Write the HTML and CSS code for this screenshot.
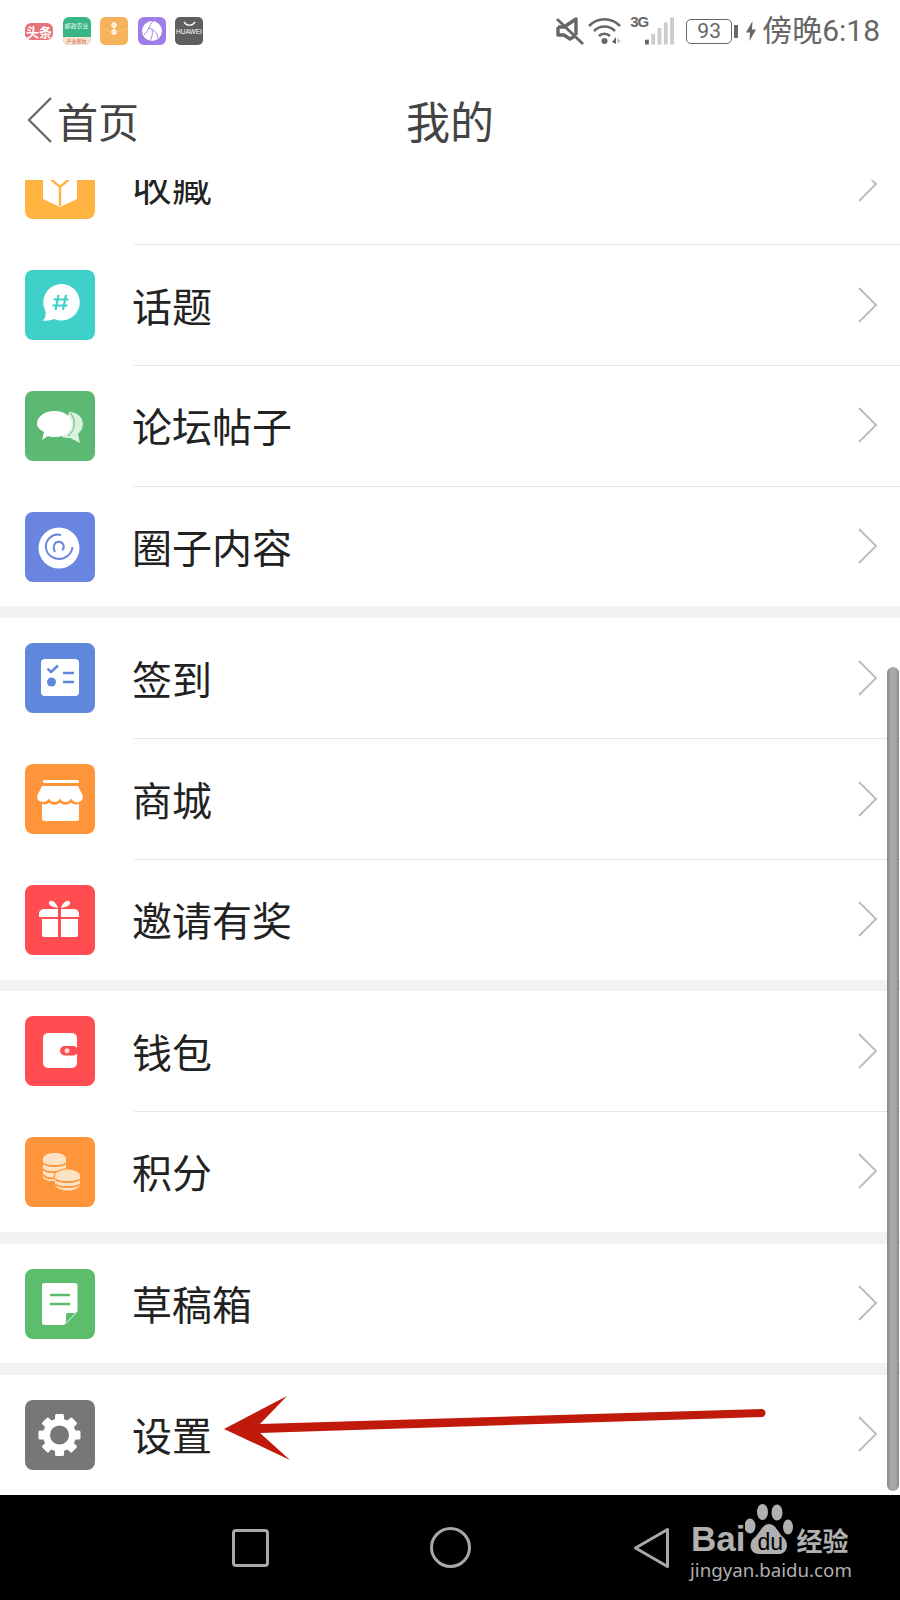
FILE: index.html
```html
<!DOCTYPE html>
<html lang="zh-CN">
<head>
    <meta charset="UTF-8">
    <meta name="viewport" content="width=device-width, initial-scale=1.0">
    <link rel="stylesheet" href="styles.css">
    <title>我的</title>
</head>
<body>
<div class="phone">

    <!-- barre d'etat -->
    <div class="status">
        <div class="notifs">
            <span class="notif toutiao">头条</span>
            <span class="notif farm"><span class="farm-top">邮政农业</span><span class="farm-bottom">产业帮扶</span></span>
            <svg class="notif" viewBox="0 0 28 28"><rect width="28" height="28" rx="5" fill="#f5b35c"/><path d="M0 11 L14 16 L28 11" fill="none" stroke="#f8c684" stroke-width="0.800"/><path d="M14 5 V17" stroke="#fff" stroke-width="1.200"/><circle cx="14" cy="8" r="2" fill="none" stroke="#fff" stroke-width="1.200"/><circle cx="14" cy="15" r="2" fill="none" stroke="#fff" stroke-width="1.200"/></svg>
            <svg class="notif" viewBox="0 0 28 28"><rect width="28" height="28" rx="6" fill="#a07ce6"/><circle cx="14" cy="14" r="10" fill="#fff"/><path d="M15 4 C11 9 11 13 6 18 M10 11 C15 12 19 15 20 21 M14 12 C15 17 14 20 12 24" fill="none" stroke="#a07ce6" stroke-width="0.900"/></svg>
            <span class="notif huawei"><svg viewBox="0 0 12 5"><path d="M1 0.500 C3 4.500 9 4.500 11 0.500" fill="none" stroke="#fff" stroke-width="1.300"/></svg><span>HUAWEI</span></span>
        </div>
        <div class="sys">
            <svg class="ic-mute" viewBox="0 0 28 28"><path d="M2 10 H8 L20 2 V18 M2 10 V18 H8 L14 22 L19 19" fill="none" stroke="#666" stroke-width="3.400" stroke-linejoin="round"/><path d="M1 2 L27 27" stroke="#666" stroke-width="2.800"/></svg>
            <svg class="ic-wifi" viewBox="0 0 33 28"><path d="M1 9 C10 0 23 0 32 9 M6 14 C12 8 21 8 27 14 M11 19 C14 16 19 16 22 19" fill="none" stroke="#666" stroke-width="2.600"/><circle cx="16.500" cy="24" r="3" fill="#666"/><path d="M24 25 L28 20 V27 Z" fill="#666"/><path d="M29 21 L33 24 L29 27 Z" fill="#ccc"/></svg>
            <div class="signal">
                <span class="net">3G</span>
                <svg class="bars" viewBox="0 0 30 28"><rect x="0" y="23" width="4" height="5" fill="#666"/><rect x="6.500" y="17" width="4" height="11" fill="#ccc"/><rect x="13" y="11" width="4" height="17" fill="#ccc"/><rect x="19.500" y="5" width="4" height="23" fill="#ccc"/><rect x="26" y="0" width="4" height="28" fill="#ccc"/></svg>
            </div>
            <span class="batt">93</span>
            <span class="batt-nub"></span>
            <svg class="ic-bolt" viewBox="0 0 10 20"><path d="M6.500 0 L0 11.500 H4 L3.500 20 L10 8.500 H6 Z" fill="#666"/></svg>
            <span class="clock">傍晚6:18</span>
        </div>
    </div>

    <!-- entete -->
    <div class="header">
        <svg class="back-arrow" viewBox="0 0 25 46"><path d="M24 1 L2 23 L24 45" fill="none" stroke="#666" stroke-width="2.200"/></svg>
        <span class="back-label">首页</span>
        <span class="title">我的</span>
    </div>

    <div class="list">
        <div class="group first">
            <div class="row">
                <svg class="tile" viewBox="0 0 70 70"><rect width="70" height="70" rx="8" fill="#ffb340"/><path d="M18 24 H52 V50 L35 58 L18 50 Z" fill="#fff"/><path d="M22 27 L35 38 L48 27 M35 38 V57" fill="none" stroke="#ffb340" stroke-width="2.400"/></svg>
                <div class="row-main"><span class="label">收藏</span><svg class="chev" viewBox="0 0 20 36"><path d="M1 1 L18 18 L1 35" fill="none" stroke="#bdbdbd" stroke-width="2"/></svg></div>
            </div>
            <div class="row">
                <svg class="tile" viewBox="0 0 70 70"><rect width="70" height="70" rx="8" fill="#3fd0c9"/><path d="M36.500 14 A18.300 18.300 0 1 1 29 49 C25 50.500 22 51 18 50.500 C20.500 48 21 45 20.500 41 A18.300 18.300 0 0 1 36.500 14 Z" fill="#fff"/><path d="M33.500 25 L30.500 40 M41 25 L38 40 M28.500 29.500 H43.500 M27.500 35.500 H42.500" fill="none" stroke="#3fd0c9" stroke-width="2.200"/></svg>
                <div class="row-main"><span class="label">话题</span><svg class="chev" viewBox="0 0 20 36"><path d="M1 1 L18 18 L1 35" fill="none" stroke="#bdbdbd" stroke-width="2"/></svg></div>
            </div>
            <div class="row">
                <svg class="tile" viewBox="0 0 70 70"><rect width="70" height="70" rx="8" fill="#5bb974"/><path d="M44 21 C53 21 58 27 58 33 C58 37 56 40 53 43 L55 52 L45 47 C42 47 40 47 37 46 Z" fill="#d8f2de"/><path d="M45 22 C51 27 51 39 43 45" fill="none" stroke="#5bb974" stroke-width="1"/><path d="M29.500 20 C40 20 47 26 47 33 C47 40 40 46 30 46 C27 46 25 46 23 45 L17 49 L19 41 C14 38 12 36 12 33 C12 26 19 20 29.500 20 Z" fill="#fff"/></svg>
                <div class="row-main"><span class="label">论坛帖子</span><svg class="chev" viewBox="0 0 20 36"><path d="M1 1 L18 18 L1 35" fill="none" stroke="#bdbdbd" stroke-width="2"/></svg></div>
            </div>
            <div class="row last">
                <svg class="tile" viewBox="0 0 70 70"><rect width="70" height="70" rx="8" fill="#6a85e0"/><circle cx="34" cy="36" r="20.500" fill="#fff"/><path d="M36 23 C27 21 20 28 21 36 C22 44 31 49 39 46 C44 44 47 40 47.500 35" fill="none" stroke="#6a85e0" stroke-width="2"/><path d="M30 40 C27 34 30 29 35 30 C39 31 40 36 37 38" fill="none" stroke="#6a85e0" stroke-width="2"/></svg>
                <div class="row-main"><span class="label">圈子内容</span><svg class="chev" viewBox="0 0 20 36"><path d="M1 1 L18 18 L1 35" fill="none" stroke="#bdbdbd" stroke-width="2"/></svg></div>
            </div>
        </div>

        <div class="group">
            <div class="row">
                <svg class="tile" viewBox="0 0 70 70"><rect width="70" height="70" rx="8" fill="#5f88dc"/><rect x="16" y="16" width="38" height="37" rx="4" fill="#fff"/><path d="M22.500 25.500 L26 29 L33 22.500" fill="none" stroke="#5f88dc" stroke-width="2.400"/><circle cx="26.500" cy="39" r="4.500" fill="#5f88dc"/><path d="M38 30 H49 M38 39 H49" stroke="#5f88dc" stroke-width="2.400"/></svg>
                <div class="row-main"><span class="label">签到</span><svg class="chev" viewBox="0 0 20 36"><path d="M1 1 L18 18 L1 35" fill="none" stroke="#bdbdbd" stroke-width="2"/></svg></div>
            </div>
            <div class="row">
                <svg class="tile" viewBox="0 0 70 70"><rect width="70" height="70" rx="8" fill="#ff953b"/><rect x="18" y="16" width="36" height="3" rx="1.500" fill="#fff"/><path d="M17 22 H53 L58 32 C58 37 54 39 50.500 38 C48 37 47 36 46 34.500 C44 39 37 39 35 34.500 C33 39 26 39 24 34.500 C22 38 17 39 13.500 36.500 C12 35 12 33 12.500 31 Z" fill="#fff"/><path d="M17 40 C20 41 24 40 24 38.500 C27 41.500 32 41.500 35 38.500 C38 41.500 43 41.500 46 38.500 C47 40 50 41 54 40 V54.500 A2.500 2.500 0 0 1 51.500 57 H19.500 A2.500 2.500 0 0 1 17 54.500 Z" fill="#fff"/></svg>
                <div class="row-main"><span class="label">商城</span><svg class="chev" viewBox="0 0 20 36"><path d="M1 1 L18 18 L1 35" fill="none" stroke="#bdbdbd" stroke-width="2"/></svg></div>
            </div>
            <div class="row last">
                <svg class="tile" viewBox="0 0 70 70"><rect width="70" height="70" rx="8" fill="#ff4d52"/><path d="M33 23 C27 22 23 20 24 17 C26 14 31 17 33 23 Z M36 23 C42 22 46 20 45 17 C43 14 38 17 36 23 Z" fill="#fff"/><path d="M14 30 A5 5 0 0 1 19 24 H33 V32 H14 Z M36 24 H49 A5 5 0 0 1 54 30 V32 H36 Z" fill="#fff"/><path d="M17 34 H33 V52 H19 A2 2 0 0 1 17 50 Z M36 34 H53 V50 A2 2 0 0 1 51 52 H36 Z" fill="#fff"/></svg>
                <div class="row-main"><span class="label">邀请有奖</span><svg class="chev" viewBox="0 0 20 36"><path d="M1 1 L18 18 L1 35" fill="none" stroke="#bdbdbd" stroke-width="2"/></svg></div>
            </div>
        </div>

        <div class="group">
            <div class="row">
                <svg class="tile" viewBox="0 0 70 70"><rect width="70" height="70" rx="8" fill="#ff4d52"/><rect x="18" y="17" width="34" height="35" rx="5" fill="#fff"/><rect x="35" y="30" width="18" height="9.500" rx="4.700" fill="#ff4d52"/><circle cx="42" cy="34.700" r="2.500" fill="#ffd9da"/></svg>
                <div class="row-main"><span class="label">钱包</span><svg class="chev" viewBox="0 0 20 36"><path d="M1 1 L18 18 L1 35" fill="none" stroke="#bdbdbd" stroke-width="2"/></svg></div>
            </div>
            <div class="row last">
                <svg class="tile" viewBox="0 0 70 70"><rect width="70" height="70" rx="8" fill="#ff953b"/><path d="M18 22 C18 18 24 16 29.500 16 C36 16 41 18 41 22 V44 H27 C22 44 18 42 18 40 Z" fill="#fde3c4"/><path d="M18 26 C21 30 38 30 41 26 M18 32 C21 36 34 36 38 33 M18 38 C21 41 26 42 31 41" fill="none" stroke="#ff953b" stroke-width="1.800"/><ellipse cx="42.500" cy="39" rx="13" ry="7" fill="#fde3c4" stroke="#ff953b" stroke-width="1.400"/><path d="M30 40 V47 C30 51 36 53.500 42.500 53.500 C49 53.500 55 51 55 47 V40 Z" fill="#fde3c4"/><ellipse cx="42.500" cy="39" rx="12.500" ry="6.500" fill="#fde3c4"/><path d="M30.500 42 C33 46 52 46 54.500 42 M30.500 47 C33 51 52 51 54.500 47" fill="none" stroke="#ff953b" stroke-width="1.800"/></svg>
                <div class="row-main"><span class="label">积分</span><svg class="chev" viewBox="0 0 20 36"><path d="M1 1 L18 18 L1 35" fill="none" stroke="#bdbdbd" stroke-width="2"/></svg></div>
            </div>
        </div>

        <div class="group">
            <div class="row last">
                <svg class="tile" viewBox="0 0 70 70"><rect width="70" height="70" rx="8" fill="#5cbd6c"/><path d="M19 14 H50 A2.500 2.500 0 0 1 52.500 16.500 V42 L39 56 H19 A2.500 2.500 0 0 1 17 53.500 V16.500 A2.500 2.500 0 0 1 19 14 Z" fill="#fff"/><path d="M25 26 H45 M25 35 H45" stroke="#5cbd6c" stroke-width="2.400"/><path d="M41 54 V45.500 A1.500 1.500 0 0 1 42.500 44 H50.500 Z" fill="#5cbd6c"/><path d="M41 54.500 L51 44" fill="none" stroke="#d9f1de" stroke-width="1"/></svg>
                <div class="row-main"><span class="label">草稿箱</span><svg class="chev" viewBox="0 0 20 36"><path d="M1 1 L18 18 L1 35" fill="none" stroke="#bdbdbd" stroke-width="2"/></svg></div>
            </div>
        </div>

        <div class="group">
            <div class="row last">
                <svg class="tile" viewBox="0 0 70 70"><rect width="70" height="70" rx="8" fill="#777"/><g transform="translate(34.500 35)" fill="#fff"><rect x="-4.500" y="-21" width="9" height="42" rx="1.500"/><rect x="-4.500" y="-21" width="9" height="42" rx="1.500" transform="rotate(45)"/><rect x="-4.500" y="-21" width="9" height="42" rx="1.500" transform="rotate(90)"/><rect x="-4.500" y="-21" width="9" height="42" rx="1.500" transform="rotate(135)"/><circle r="16.500"/><circle r="9.500" fill="#777"/></g></svg>
                <div class="row-main"><span class="label">设置</span><svg class="chev" viewBox="0 0 20 36"><path d="M1 1 L18 18 L1 35" fill="none" stroke="#bdbdbd" stroke-width="2"/></svg></div>
            </div>
        </div>
    </div>

    <!-- boutons android -->
    <div class="nav">
        <span class="nav-square"></span>
        <span class="nav-circle"></span>
        <svg class="nav-back" viewBox="0 0 37 42"><path d="M34.500 2.500 V39.500 L2.500 21 Z" fill="none" stroke="#a8a8a8" stroke-width="3" stroke-linejoin="round"/></svg>
    </div>

    <div class="scrollbar"></div>

    <svg class="arrow" viewBox="0 0 900 1600"><path d="M224 1429 L287 1396 L260 1424 L762 1409 A4.200 4.200 0 0 1 763 1417 L260 1433 L290 1460 Z" fill="#bf1a0c"/></svg>

    <!-- filigrane -->
    <div class="mark">
        <div class="mark-top">
            <span class="mark-bai">Bai</span>
            <span class="mark-paw">
                <svg viewBox="0 0 48 52"><ellipse cx="5" cy="22" rx="5.500" ry="7.500" fill="#b0b0b0"/><ellipse cx="17.500" cy="8" rx="5.500" ry="8" fill="#b0b0b0"/><ellipse cx="32" cy="8.500" rx="5.500" ry="8" fill="#b0b0b0"/><ellipse cx="43" cy="23" rx="5" ry="7.500" fill="#b0b0b0"/><path d="M24 20 C31 20 33 29 39 34 C44 39 43 50 33 50 C28 50 20 50 14 50 C5 50 3 39 9 34 C15 29 17 20 24 20 Z" fill="#b0b0b0"/></svg>
                <span class="mark-du">du</span>
            </span>
            <span class="mark-jy">经验</span>
        </div>
        <div class="mark-url">jingyan.baidu.com</div>
    </div>

</div>
</body>
</html>
```

FILE: styles.css
```css
* {
    box-sizing: border-box;
}

body {
    margin: 0;
    background: #fff;
    font-family: "Noto Sans CJK SC", "Roboto", sans-serif;
}

.phone {
    position: relative;
    width: 900px;
    height: 1600px;
    overflow: hidden;
    display: flex;
    flex-direction: column;
    background: #fff;
}

/* status bar */
.status {
    height: 60px;
    flex: none;
    padding: 17px 20px 0 25px;
    display: flex;
    justify-content: space-between;
    align-items: flex-start;
}

.notifs {
    display: flex;
    gap: 9.500px;
    align-items: center;
    height: 28px;
}

.notif {
    width: 28px;
    height: 28px;
    flex: none;
}

.toutiao {
    height: 17px;
    background: #e8737a;
    color: #fff;
    border-radius: 6px;
    font-size: 13px;
    font-weight: 700;
    line-height: 17px;
    text-align: center;
    white-space: nowrap;
}

.farm {
    border-radius: 6px;
    overflow: hidden;
    display: flex;
    flex-direction: column;
    background: #38b584;
    color: #e9f8ef;
    font-size: 6px;
    text-align: center;
    white-space: nowrap;
}

.farm-top {
    height: 20px;
    line-height: 18px;
}

.farm-bottom {
    height: 8px;
    line-height: 8px;
    background: #f8e3cf;
    color: #c6613f;
    font-size: 5px;
}

.huawei {
    background: #5f5f5f;
    border-radius: 5px;
    color: #fff;
    font-family: "Liberation Sans", sans-serif;
    font-size: 6.500px;
    line-height: 8px;
    text-align: center;
    padding-top: 4px;
    white-space: nowrap;
    overflow: hidden;
}

.huawei svg {
    display: block;
    width: 13px;
    height: 6px;
    margin: 0 auto 1px;
}

.sys {
    display: flex;
    align-items: center;
    height: 28px;
}

.ic-mute {
    width: 28px;
    height: 28px;
    margin-right: 4px;
}

.ic-wifi {
    width: 33px;
    height: 28px;
    margin-right: 13px;
}

.signal {
    position: relative;
    width: 29px;
    height: 28px;
    margin-right: 12px;
}

.net {
    position: absolute;
    left: -4px;
    top: -3px;
    font-family: "Liberation Sans", sans-serif;
    font-size: 15px;
    letter-spacing: -1px;
    line-height: 15px;
    font-weight: 700;
    color: #666;
}

.bars {
    position: absolute;
    left: 11px;
    top: 0;
    width: 29px;
    height: 28px;
}

.batt {
    width: 46px;
    height: 25px;
    border: 1.500px solid #666;
    border-radius: 5px;
    margin-left: 11px;
    color: #666;
    font-family: "Roboto", sans-serif;
    font-size: 21px;
    line-height: 22px;
    text-align: center;
}

.batt-nub {
    width: 4px;
    height: 13px;
    background: #666;
    border-radius: 1px;
    margin-left: 2px;
}

.ic-bolt {
    width: 10px;
    height: 20px;
    margin-left: 8px;
}

.clock {
    margin-left: 6px;
    color: #666;
    font-family: "Roboto", "Noto Sans CJK SC", sans-serif;
    font-size: 30px;
    line-height: 28px;
    white-space: nowrap;
}

/* header */
.header {
    position: relative;
    height: 120px;
    flex: none;
    padding-left: 27px;
    display: flex;
    align-items: center;
    color: #444;
}

.back-arrow {
    width: 25px;
    height: 46px;
    flex: none;
}

.back-label {
    margin-left: 5px;
    font-size: 41px;
    line-height: 50px;
}

.title {
    position: absolute;
    left: 0;
    right: 0;
    top: 33px;
    text-align: center;
    font-size: 44px;
    line-height: 54px;
}

/* list */
.list {
    flex: 1;
    min-height: 0;
    overflow: hidden;
    background: #f2f2f2;
}

.group {
    background: #fff;
    margin-top: 11.800px;
}

.group.first {
    margin-top: -55.600px;
}

.row {
    display: flex;
    align-items: flex-start;
    padding-left: 25px;
}

.tile {
    width: 70px;
    height: 70px;
    flex: none;
    margin-top: 25px;
}

.row-main {
    flex: 1;
    height: 120.830px;
    margin-left: 39px;
    padding-right: 22px;
    border-bottom: 1px solid #e6e6e6;
    display: flex;
    align-items: center;
    justify-content: space-between;
}

.row.last .row-main {
    height: 119.600px;
    border-bottom: none;
}

.label {
    font-size: 40px;
    line-height: 50px;
    color: #222;
    margin-top: -1px;
    margin-left: -2px;
}

.chev {
    width: 20px;
    height: 36px;
    flex: none;
    margin-top: -1px;
}

/* nav bar */
.nav {
    height: 105px;
    flex: none;
    background: #000;
    display: flex;
    align-items: center;
    padding: 0 0 0 232px;
}

.nav-square {
    width: 37px;
    height: 38px;
    border: 3px solid #a8a8a8;
    border-radius: 4px;
}

.nav-circle {
    width: 41px;
    height: 41px;
    border: 3px solid #a8a8a8;
    border-radius: 50%;
    margin-left: 161px;
}

.nav-back {
    width: 37px;
    height: 42px;
    margin-left: 162px;
}

/* overlays */
.scrollbar {
    position: absolute;
    left: 887px;
    top: 667px;
    width: 12px;
    height: 824px;
    border-radius: 6px;
    background: linear-gradient(to right, #8a8a8a, #a8a8a8 35%, #a8a8a8 70%, #8a8a8a);
}

.arrow {
    position: absolute;
    left: 0;
    top: 0;
    width: 900px;
    height: 1600px;
    pointer-events: none;
}

.mark {
    position: absolute;
    left: 690px;
    top: 1503px;
    width: 165px;
    color: #b0b0b0;
}

.mark-top {
    display: flex;
    align-items: flex-end;
    height: 55px;
}

.mark-bai {
    font-family: "Liberation Sans", sans-serif;
    font-size: 35px;
    font-weight: 700;
    line-height: 40px;
    margin-bottom: -1px;
    margin-left: 1px;
}

.mark-paw {
    position: relative;
    width: 48px;
    height: 52px;
    margin-bottom: 2px;
}

.mark-paw svg {
    width: 48px;
    height: 52px;
    display: block;
}

.mark-du {
    position: absolute;
    left: 12px;
    bottom: 3px;
    font-family: "Liberation Sans", sans-serif;
    font-size: 23px;
    line-height: 22px;
    color: #000;
}

.mark-jy {
    font-size: 26px;
    line-height: 32px;
    font-weight: 700;
    white-space: nowrap;
    margin-left: 3px;
    margin-bottom: 2px;
}

.mark-url {
    font-family: "Noto Sans", sans-serif;
    font-size: 18.700px;
    line-height: 26px;
    white-space: nowrap;
    margin-top: -1px;
}
```
